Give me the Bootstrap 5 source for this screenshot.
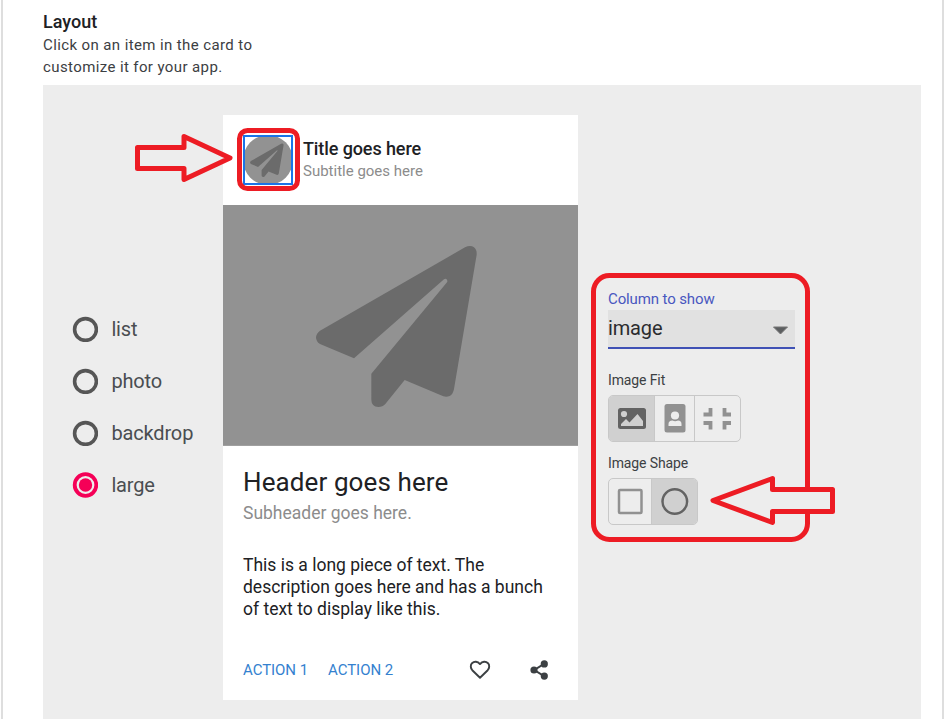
<!DOCTYPE html>
<html lang="en">
<head>
<meta charset="utf-8">
<meta name="viewport" content="width=device-width, initial-scale=1">
<title>Layout</title>
<link href="https://cdn.jsdelivr.net/npm/bootstrap@5.3.0/dist/css/bootstrap.min.css" rel="stylesheet">
<style>
body{font-family:Roboto,"Liberation Sans",sans-serif;color:#202124;background:#fff;overflow:hidden}
svg{display:block;flex:none}
.page-frame{border-left:2px solid #dedede;border-right:2px solid #dedede;height:719px;width:943px;margin-left:1px;padding:11px 20px 0 40px}
.intro-title{font-size:18px;font-weight:500;line-height:22px}
.intro-text{font-size:15px;line-height:22px;letter-spacing:.39px;color:#3c4043;width:230px;margin-top:1px}
.stage{background:#ededed;width:878px;height:634px;margin-top:7px;padding-top:30px}
.kinds{width:180px;padding:188px 0 0 29px}
.kind{height:52px;gap:13.400px;font-size:20px;letter-spacing:-.15px;color:#4a4d51}
.preview{width:355px;height:585px;border:0;border-radius:0}
.preview-top{height:90px;padding:20px 20px 0;gap:10px}
.avatar{width:50px;height:50px;border:2px solid #1a73e8}
.avatar svg{margin:-2px;width:50px;height:50px;position:relative;z-index:-1}
.avatar-wrap{isolation:isolate}
.ttl{font-size:18px;font-weight:500;line-height:22px;margin-top:3px;letter-spacing:-.1px}
.sub{font-size:15px;line-height:22px;color:#8c8c8c}
.hero{height:241px;background:#929292;border-bottom:1px solid #a0a0a0}
.head{font-size:26px;line-height:32px;letter-spacing:.1px}
.subhead{font-size:17.500px;line-height:24px;color:#8c8c8c;margin-top:3px}
.desc{font-size:17.500px;line-height:22px;margin-top:29px;white-space:nowrap}
.acts{padding:0 20px;height:60px}
.acts a{font-size:15px;letter-spacing:-.05px;color:#3481cf;text-decoration:none}
.share-icon{margin:0 9px 0 38px}
.opts{padding:173px 0 0 30px}
.lbl{font-size:14px;line-height:18px;letter-spacing:-.12px;color:#3c4043}
.lbl-column{font-size:15px;line-height:22px;color:#4957c0}
.lbl-fit{margin-top:22px;margin-bottom:6px}
.lbl-shape{margin-top:12px;margin-bottom:6px}
.picker{width:187px;height:39px;background:#e1e1e1;border-bottom:2px solid #3f51b5;font-size:20px;letter-spacing:-.15px;padding:0 7px 1px 0;color:#2b2c2f}
.seg{height:47px;border:1px solid #c8c8c8;border-radius:5px;overflow:hidden;width:max-content}
.seg>div+div{border-left:1px solid #c8c8c8}
.seg .on{background:#d0d0d0}
.marks{position:absolute;left:0;top:0;pointer-events:none}
</style>
<script src="https://cdn.jsdelivr.net/npm/bootstrap@5.3.0/dist/js/bootstrap.bundle.min.js"></script>
</head>
<body class="position-relative">
<svg width="0" height="0" class="position-absolute"><defs>
<path id="plane" d="M495 52Q511 44 522 52Q531 59 530 74L462 477Q459 493 449 498Q440 502 430 499L314 450L256 522Q248 531 235 531Q214 529 214 509V431L441 157Q444 151 439 147Q435 145 432 148L162 385L60 342Q48 335 48 322Q49 310 60 302Z"/>
</defs></svg>
<main class="page-frame">
  <div class="intro-title">Layout</div>
  <div class="intro-text">Click on an item in the card to customize it for your app.</div>
  <section class="stage d-flex align-items-start">
    <div class="kinds">
      <div class="kind d-flex align-items-center"><svg width="26" height="26"><circle cx="13.500" cy="13.500" r="10.900" fill="none" stroke="#565656" stroke-width="3.600"/></svg>list</div>
      <div class="kind d-flex align-items-center"><svg width="26" height="26"><circle cx="13.500" cy="13.500" r="10.900" fill="none" stroke="#565656" stroke-width="3.600"/></svg>photo</div>
      <div class="kind d-flex align-items-center"><svg width="26" height="26"><circle cx="13.500" cy="13.500" r="10.900" fill="none" stroke="#565656" stroke-width="3.600"/></svg>backdrop</div>
      <div class="kind d-flex align-items-center"><svg width="26" height="26"><circle cx="13.500" cy="13" r="10.800" fill="none" stroke="#f50057" stroke-width="3.800"/><circle cx="13.500" cy="13" r="6.700" fill="#f50057"/></svg>large</div>
    </div>
    <article class="preview card">
      <div class="preview-top d-flex">
        <div class="avatar-wrap"><div class="avatar"><svg viewBox="-54 -74 720 720"><circle cx="306" cy="286" r="360" fill="#929292"/><use href="#plane" fill="#6b6b6b"/></svg></div></div>
        <div><div class="ttl">Title goes here</div><div class="sub">Subtitle goes here</div></div>
      </div>
      <div class="hero"><svg width="355" height="240" viewBox="-231 -75 1065 720"><use href="#plane" fill="#6b6b6b"/></svg></div>
      <div class="px-3 mx-1 pt-3 mt-1">
        <div class="head">Header goes here</div>
        <div class="subhead">Subheader goes here.</div>
        <div class="desc">This is a long piece of text. The<br>description goes here and has a bunch<br>of text to display like this.</div>
      </div>
      <div class="acts d-flex align-items-center mt-auto">
        <a href="#">ACTION 1</a><a href="#" class="ms-3 ps-1">ACTION 2</a>
        <svg class="ms-auto" width="22" height="20" viewBox="0 0 22 20"><path d="M11 17.800L3.300 10.200C1.400 8.200 1.300 5 3 3.200C5.300 1 8.600 1.300 11 4.100C13.400 1.300 16.700 1 19 3.200C20.700 5 20.600 8.200 18.700 10.200Z" fill="none" stroke="#3c4043" stroke-width="1.900" stroke-linejoin="round"/></svg>
        <svg class="share-icon" width="20" height="20" viewBox="0 0 20 20" fill="#3c4043"><path d="M15.500 3.700L5.300 10L15.500 16.300" fill="none" stroke="#3c4043" stroke-width="2"/><circle cx="15.300" cy="3.900" r="3.600"/><circle cx="5" cy="10" r="3.600"/><circle cx="15.300" cy="16.100" r="3.600"/></svg>
      </div>
    </article>
    <div class="opts">
      <div class="lbl lbl-column">Column to show</div>
      <div class="picker d-flex align-items-center justify-content-between"><span>image</span><svg class="mt-1" width="16" height="9"><path d="M1.500 1H15.500L8.500 8Z" fill="#5c5e60" stroke="#757575"/></svg></div>
      <div class="lbl lbl-fit">Image Fit</div>
      <div class="seg d-flex">
        <div class="on"><svg width="45" height="45" viewBox="0 0 45 45"><rect x="9" y="12" width="28" height="21" rx="2.500" fill="#636363"/><circle cx="15" cy="18" r="3.100" fill="#d0d0d0"/><path d="M12 30V28L17 23L20.500 26.500L28.500 18L34 25V30Z" fill="#d0d0d0"/></svg></div>
        <div><svg width="39" height="45" viewBox="0 0 39 45"><rect x="9.500" y="8" width="21" height="28.500" rx="2.500" fill="#919191"/><circle cx="20" cy="19.500" r="4.100" fill="#ededed"/><path d="M13.500 30V28Q13.500 24.500 17.500 24.500Q20 26 23 24.500Q26.500 24.500 26.500 28V30Z" fill="#ededed"/></svg></div>
        <div><svg width="45" height="45" viewBox="0 0 45 45" fill="none" stroke="#919191" stroke-width="3.800"><path d="M8.500 18.500H15.500V12M36 18.500H29.500V12M8.500 27H15.500V33.500M36 27H29.500V33.500"/></svg></div>
      </div>
      <div class="lbl lbl-shape">Image Shape</div>
      <div class="seg d-flex">
        <div><svg width="42" height="45"><rect x="10" y="11" width="22.500" height="23" rx="1" fill="none" stroke="#919191" stroke-width="2.500"/></svg></div>
        <div class="on"><svg width="45" height="45"><circle cx="22.800" cy="22.500" r="12.300" fill="none" stroke="#636363" stroke-width="2.500"/></svg></div>
      </div>
    </div>
  </section>
</main>
<svg class="marks" width="944" height="719" fill="none" stroke="#ed1c24" stroke-width="5" stroke-linejoin="round">
  <path d="M137.500 147.500H184V136.500L230 158L184 179.500V168.500H137.500Z"/>
  <rect x="239.500" y="130.500" width="58" height="58" rx="8"/>
  <rect x="593.500" y="275.500" width="214" height="264" rx="16"/>
  <path d="M832.500 489.500H772.500V478.500L713 500.500L772.500 522.500V511.500H832.500Z" fill="#ededed"/>
</svg>
</body>
</html>
